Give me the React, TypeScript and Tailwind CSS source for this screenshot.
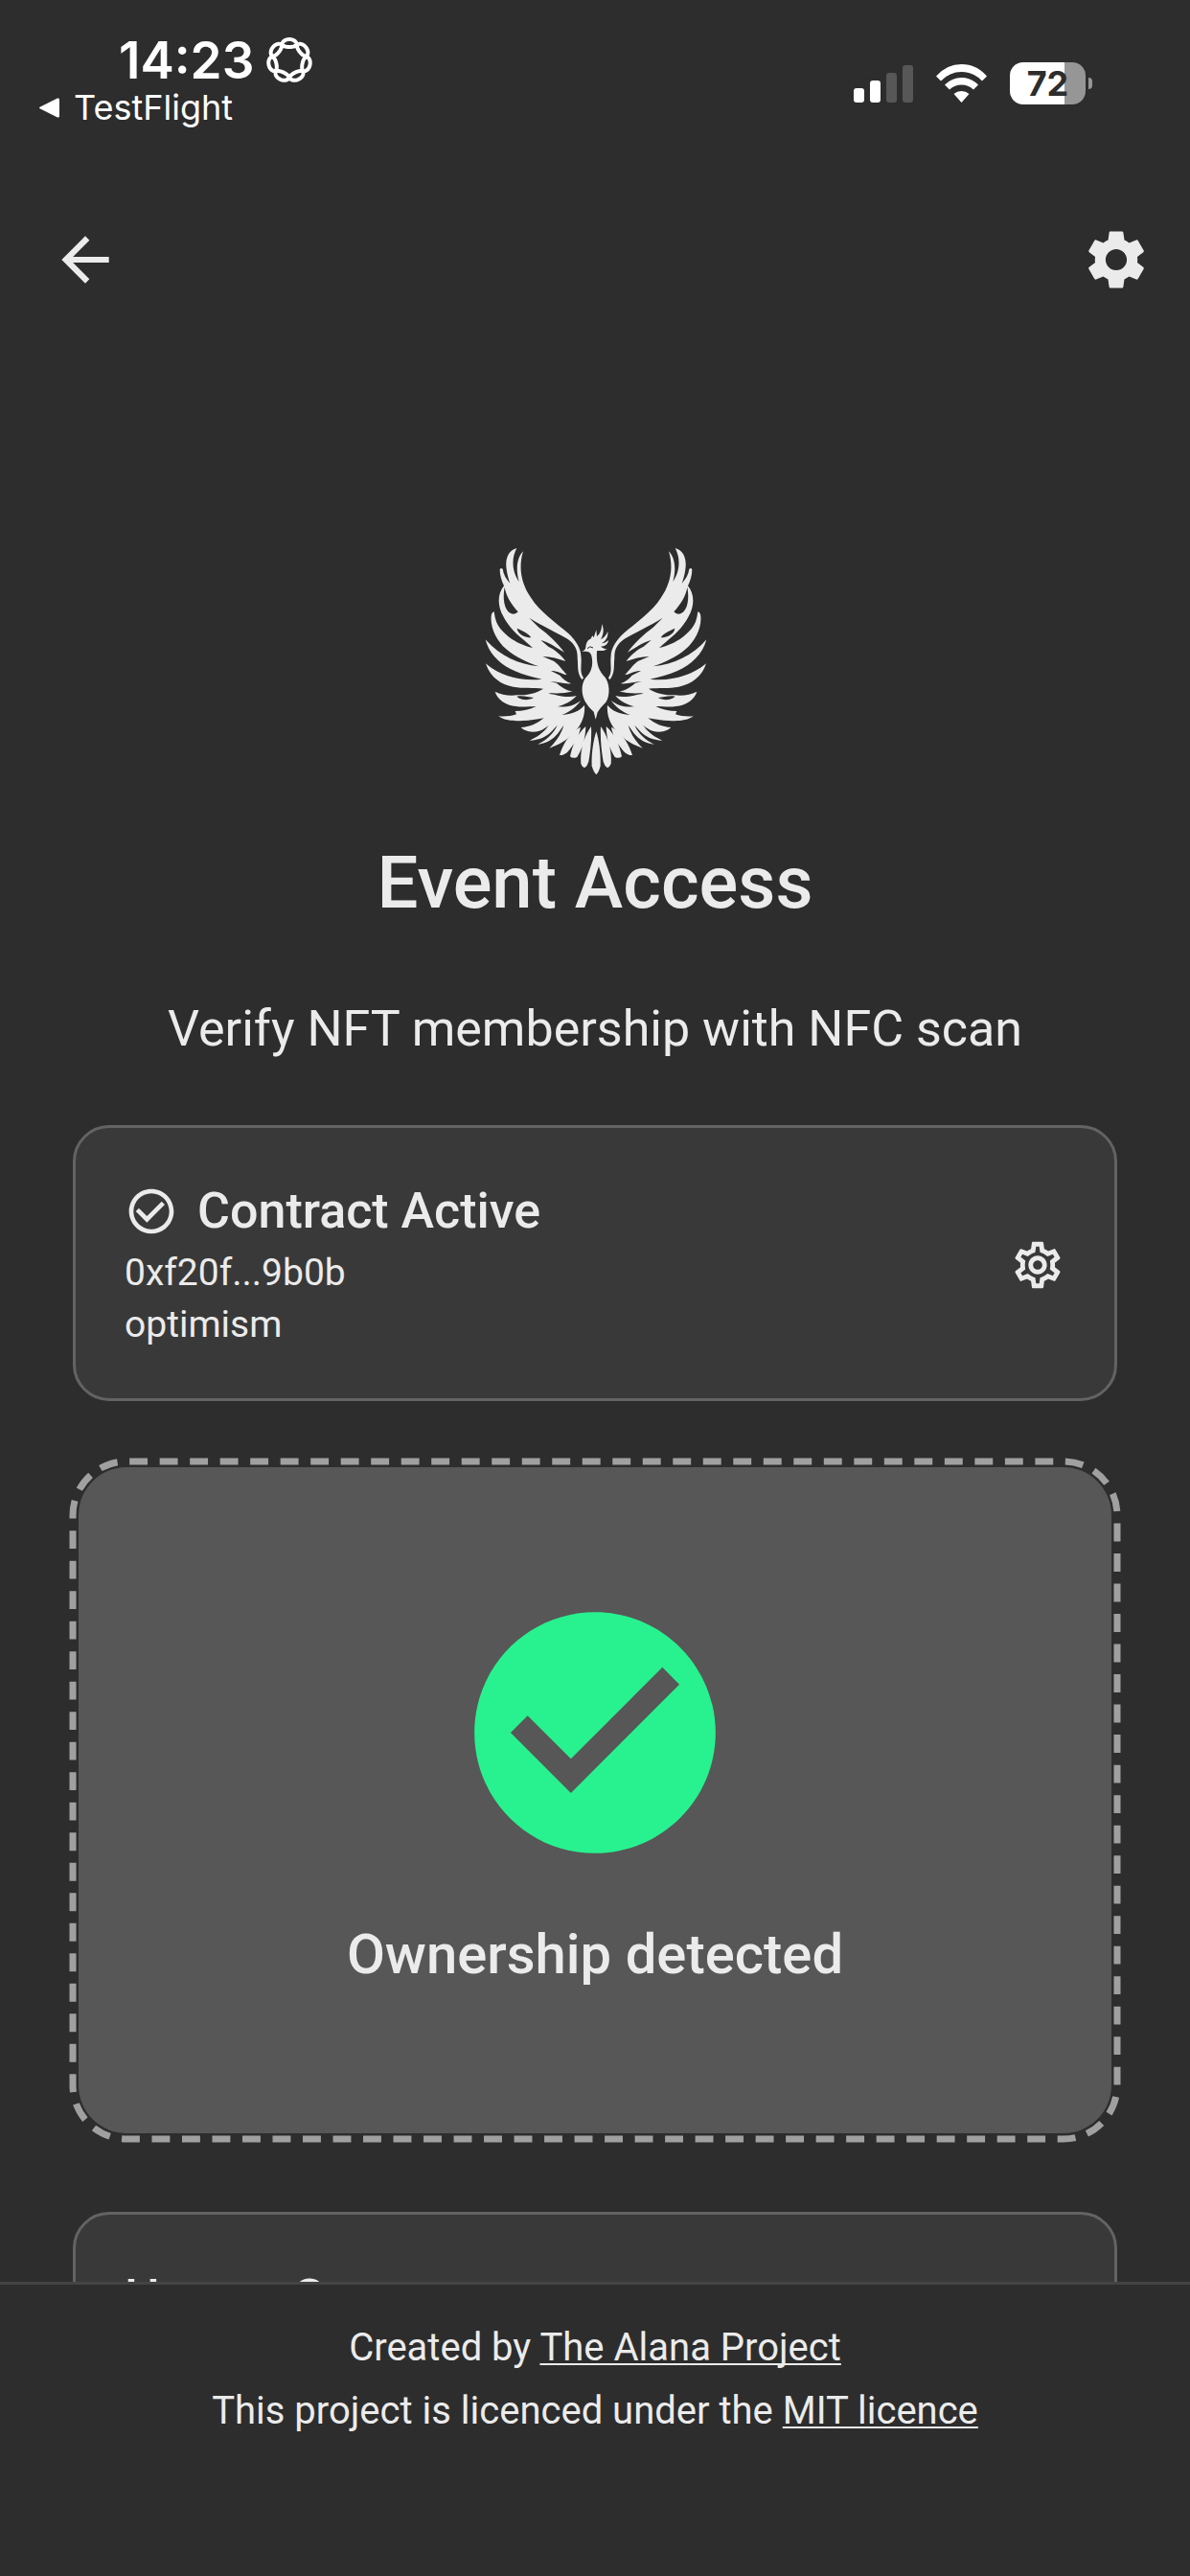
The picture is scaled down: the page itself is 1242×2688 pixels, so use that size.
import type { ReactNode } from 'react';
import {
  MdArrowBack,
  MdCheckCircle,
  MdCheckCircleOutline,
  MdOutlineSettings,
  MdSettings,
} from 'react-icons/md';
import { cva, type VariantProps } from 'class-variance-authority';
import { twMerge } from 'tailwind-merge';

const textVariants = cva("font-['Roboto',sans-serif] text-[#ebebeb]", {
  variants: {
    size: {
      display: 'text-[76px] leading-[96px] font-medium',
      title: 'text-[52px] leading-[66px] font-medium',
      result: 'text-[58px] leading-[72px] font-medium',
      lead: 'text-[52px] leading-[72px]',
      body: 'text-[39px] leading-[54px]',
      footer: 'text-[40px] leading-[66px]',
    },
  },
  defaultVariants: {
    size: 'body',
  },
});

interface TextProps extends VariantProps<typeof textVariants> {
  as?: 'p' | 'h1' | 'h2';
  className?: string;
  children: ReactNode;
}

function Text({ as: Tag = 'p', size, className, children }: TextProps) {
  return (
    <Tag className={twMerge(textVariants({ size }), className)}>{children}</Tag>
  );
}

// one closed strand that goes round twice and makes seven loops
const focusPoints = Array.from({ length: 280 }, (_, i) => {
  const t = (i / 280) * Math.PI * 4;
  const r = 18 + 4 * Math.cos(3.5 * t);
  const angle = t + 0.07 * Math.sin(7 * t);
  const x = r * Math.sin(angle);
  const y = -r * Math.cos(angle);
  return `${x.toFixed(2)},${y.toFixed(2)}`;
}).join(' ');

function FocusIcon() {
  return (
    <svg viewBox="-25 -25 50 50" className="size-[50px]" aria-hidden="true">
      <polygon
        points={focusPoints}
        fill="none"
        stroke="white"
        strokeWidth="4"
        strokeLinejoin="round"
      />
    </svg>
  );
}

function StatusBar() {
  return (
    <div className="flex h-[168px] shrink-0 justify-between pl-10 pr-[102px] font-['Inter',sans-serif] text-white">
      <div className="pt-8">
        <div className="flex h-[62px] items-center gap-3 pl-[84px]">
          <span className="text-[53px] leading-[62px] font-semibold">14:23</span>
          <FocusIcon />
        </div>
        <a href="#testflight" className="flex h-9 items-center gap-[14px]">
          <svg viewBox="0 0 23 23" className="size-[23px]" aria-hidden="true">
            <path
              d="M2 10.5 20 1.5Q22 1 22 3V20Q22 22 20 21.500L2 12.500Q0 11.500 2 10.500Z"
              fill="white"
            />
          </svg>
          <span className="text-[36px] leading-9">TestFlight</span>
        </a>
      </div>

      <div className="flex h-11 items-center gap-6 mt-[65px]">
        <div className="flex h-10 items-end gap-[6px]">
          <div className="h-[15px] w-[11px] rounded-[3px] bg-white" />
          <div className="h-[23px] w-[11px] rounded-[3px] bg-white" />
          <div className="h-[31px] w-[11px] rounded-[3px] bg-[#575757]" />
          <div className="h-[39px] w-[11px] rounded-[3px] bg-[#575757]" />
        </div>
        <svg viewBox="0 0 53 40" className="h-10 w-[53px]" aria-label="Wi-Fi">
          <path
            fill="white"
            d="M0 12.500Q11 0 26.500 0Q42 0 53 12.500L48 17.500Q39 8 26.500 8Q14 8 5 17.500ZM9 21.500Q16.500 14 26.500 14Q36.500 14 44 21.500L39 26.500Q33.500 21.500 26.500 21.500Q19.500 21.500 14 26.500ZM18.500 31Q22 28 26.500 28Q31 28 34.500 31L26.500 40Z"
          />
        </svg>
        <div className="flex items-center gap-[3px]">
          <div className="flex h-11 w-[79px] items-center justify-center rounded-[14px] bg-linear-to-r from-white from-72% to-[#969696] to-72% text-[36px] leading-11 font-bold text-[#2d2d2d]">
            72
          </div>
          <div className="h-3 w-[4px] rounded-r-full bg-[#969696]" />
        </div>
      </div>
    </div>
  );
}

function PhoenixWing() {
  return (
    <>
      <path
        fill="#ebebeb"
        d="M145 66C118 72 108 102 113 132C115 148 119 162 124 176C112 162 103 148 101 131Q95 126 92 133C92 152 98 170 105 184C84 210 84 246 103 280C118 308 135 328 165 352L195 378C142 366 96 332 81 296Q76 282 74 265Q66 266 65 280C62 316 82 356 112 382C140 406 178 424 214 436C150 430 90 402 47 352C58 398 96 432 138 450C164 462 194 470 224 476C160 484 94 466 48 427C60 466 92 492 134 500C164 506 196 502 228 506C204 522 176 526 146 526C120 530 98 524 77 515C84 540 112 558 142 561C160 564 180 562 206 561C186 572 164 576 140 576L144 586C128 592 108 594 88 592C106 606 136 608 164 606C186 606 206 602 230 598C208 616 186 626 158 627C174 642 196 644 216 638C226 634 236 628 245 620C230 644 208 658 185 668C216 668 238 656 254 640L272 620C258 650 236 668 210 680C236 678 258 666 274 646L292 620C284 650 266 674 247 692C276 682 302 668 326 642C348 618 360 590 357 557C344 574 324 584 286 588C312 578 332 562 346 542C326 558 306 564 272 562C296 556 318 544 332 528C310 534 286 530 262 524Q250 524 244 520C268 520 296 522 320 514C300 512 286 502 270 488L250 484C272 484 294 492 316 490C300 484 290 476 280 464L252 450C272 448 288 462 302 462C290 450 276 430 262 420L226 405C252 406 276 412 298 420C284 400 262 382 244 374L220 354C246 360 272 380 294 392C274 364 242 334 214 314L184 284C226 310 270 330 304 350C328 366 336 386 335 410C338 432 332 456 350 478L354 472C340 452 350 430 346 402C346 380 330 354 306 332C270 302 216 264 190 222C158 176 150 126 165 76C144 98 142 134 152 170C132 144 126 100 145 66Z"
      />
      <path
        fill="#2d2d2d"
        d="M107 188C112 218 130 244 149 265Q140 276 126 270C106 260 100 224 107 188ZM146 317C160 324 180 330 190 346C172 346 148 336 146 317ZM145 530C164 526 180 532 198 534C182 544 156 542 145 530Z"
      />
      <path
        fill="#ebebeb"
        d="M378 624C362 646 342 690 346 740Q350 752 358 753Q366 748 370 734C376 700 380 660 378 624ZM361 624C336 646 320 680 312 718Q320 726 334 720C352 692 360 658 361 624ZM345 626C318 638 292 672 279 714Q290 716 304 704C324 682 340 656 345 626Z"
      />
    </>
  );
}

function PhoenixLogo() {
  return (
    <svg
      viewBox="0 0 780 810"
      className="h-[270px] w-[260px]"
      role="img"
      aria-label="Phoenix"
    >
      <PhoenixWing />
      <g transform="translate(786 0) scale(-1 1)">
        <PhoenixWing />
      </g>
      {/* body, head and crest */}
      <g fill="#ebebeb">
        <path d="M348 390C356 388 360 384 361 376C362 364 366 354 376 350L382 340L386 346L394 322L396 342C406 334 412 320 411 303C420 320 416 338 408 352C418 346 426 338 430 326C432 346 422 358 410 364C418 364 426 360 432 354C430 368 420 374 408 374C414 378 420 382 428 382C418 390 406 386 396 388C394 420 398 444 416 464C438 484 438 528 424 548C412 560 402 572 398 580L392 602L386 578C376 570 364 556 358 544C346 520 346 484 366 466C384 446 384 420 378 400C374 388 364 388 348 390Z" />
        <path d="M394 640C402 664 408 706 407 748Q402 768 394 775Q386 768 380 748C378 706 386 664 394 640Z" />
      </g>
      <path
        d="M366 380Q374 370 384 378"
        fill="none"
        stroke="#2d2d2d"
        strokeWidth="3"
      />
    </svg>
  );
}

function Header() {
  return (
    <header className="flex shrink-0 items-center justify-between pl-[52px] pr-10 py-[66px]">
      <button type="button" aria-label="Back">
        <MdArrowBack className="size-[74px] text-[#ebebeb]" />
      </button>
      <button type="button" aria-label="Settings">
        <MdSettings className="size-[74px] text-[#ebebeb]" />
      </button>
    </header>
  );
}

function Card({ className, children }: { className?: string; children: ReactNode }) {
  return (
    <section
      className={twMerge(
        'rounded-[38px] border-[3px] border-[#636363] bg-[#393939] px-[51px] pt-[54px] pb-[50px]',
        className,
      )}
    >
      {children}
    </section>
  );
}

function ContractCard() {
  return (
    <Card className="mt-16 flex items-center justify-between">
      <div>
        <div className="mb-1 flex items-center gap-5">
          <MdCheckCircleOutline className="size-[56px] text-[#ebebeb]" />
          <Text as="h2" size="title">
            Contract Active
          </Text>
        </div>
        <Text>0xf20f...9b0b</Text>
        <Text>optimism</Text>
      </div>
      <button type="button" aria-label="Contract settings">
        <MdOutlineSettings className="size-[58px] text-[#ebebeb]" />
      </button>
    </Card>
  );
}

function ScanResult() {
  return (
    <div className="relative mt-[63px] p-[6px]">
      {/* dashed outline round the panel */}
      <svg
        className="absolute inset-0 size-full overflow-visible"
        aria-hidden="true"
      >
        <rect
          width="100%"
          height="100%"
          rx="56"
          pathLength="1110"
          fill="none"
          stroke="#a0a0a0"
          strokeWidth="7"
          strokeDasharray="6 4"
          strokeDashoffset="-1"
        />
      </svg>
      <div className="flex flex-col items-center gap-11 rounded-[50px] bg-[#575757] pt-[126px] pb-[151px]">
        <MdCheckCircle className="size-[302px] text-[#28f28f]" />
        <Text size="result">Ownership detected</Text>
      </div>
    </div>
  );
}

function FooterLink({ href, children }: { href: string; children: ReactNode }) {
  return (
    <a
      href={href}
      className="underline decoration-2 underline-offset-[3px] [text-decoration-skip-ink:none]"
    >
      {children}
    </a>
  );
}

function Footer() {
  return (
    <footer className="h-[307px] shrink-0 border-t-[3px] border-[#444444] bg-[#2d2d2d] pt-[33px] text-center">
      <Text size="footer">
        Created by <FooterLink href="#alana">The Alana Project</FooterLink>
      </Text>
      <Text size="footer">
        This project is licenced under the{' '}
        <FooterLink href="#licence">MIT licence</FooterLink>
      </Text>
    </footer>
  );
}

export default function App() {
  return (
    <div className="flex h-screen flex-col overflow-hidden bg-[#2d2d2d]">
      <StatusBar />
      <Header />
      <main className="min-h-0 flex-1 overflow-hidden px-[76px] pt-44">
        <div className="flex flex-col items-center">
          <PhoenixLogo />
          <Text as="h1" size="display" className="mt-[53px]">
            Event Access
          </Text>
          <Text size="lead" className="mt-[69px]">
            Verify NFT membership with NFC scan
          </Text>
        </div>
        <ContractCard />
        <ScanResult />
        <Card className="mt-[76px]">
          <Text as="h2" size="title">
            How to Scan
          </Text>
        </Card>
      </main>
      <Footer />
    </div>
  );
}
